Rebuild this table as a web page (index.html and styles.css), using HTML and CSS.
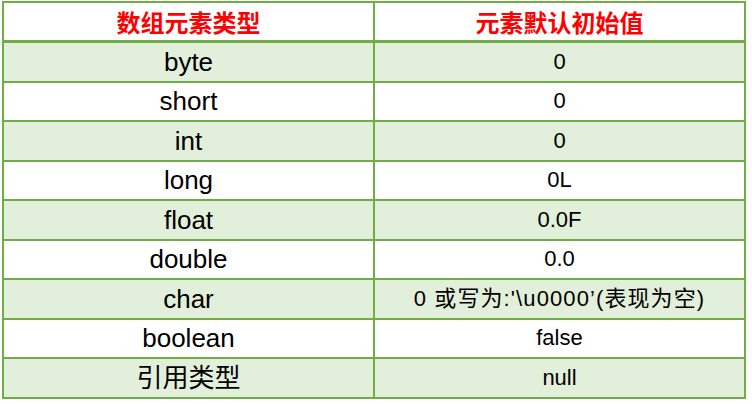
FILE: index.html
```html
<!DOCTYPE html>
<html lang="zh">
<head>
<meta charset="utf-8">
<link rel="stylesheet" href="styles.css">
</head>
<body>
<table class="tbl">
  <thead>
    <tr><th>数组元素类型</th><th>元素默认初始值</th></tr>
  </thead>
  <tbody>
    <tr class="g"><td class="k">byte</td><td class="v">0</td></tr>
    <tr><td class="k">short</td><td class="v">0</td></tr>
    <tr class="g"><td class="k">int</td><td class="v">0</td></tr>
    <tr><td class="k">long</td><td class="v">0L</td></tr>
    <tr class="g"><td class="k">float</td><td class="v">0.0F</td></tr>
    <tr><td class="k">double</td><td class="v">0.0</td></tr>
    <tr class="g"><td class="k">char</td><td class="v wide">0 或写为:'\u0000’(表现为空)</td></tr>
    <tr><td class="k">boolean</td><td class="v">false</td></tr>
    <tr class="g"><td class="k">引用类型</td><td class="v">null</td></tr>
  </tbody>
</table>
</body>
</html>
```
FILE: styles.css
```css
html, body {
  margin: 0;
  padding: 0;
  background: #ffffff;
}
body {
  padding: 1px 0 0 2px;
  font-family: "Liberation Sans", "Noto Sans CJK SC", sans-serif;
  color: #000;
}
.tbl {
  border-collapse: collapse;
  width: 744px;
  table-layout: fixed;
  border: 2px solid #70ad47;
}
.tbl th, .tbl td {
  border: 2px solid #70ad47;
  text-align: center;
  vertical-align: middle;
  padding: 0;
  line-height: 1;
}
.tbl th {
  height: 37px;
  color: #ff0000;
  font-weight: bold;
  font-size: 24px;
  font-family: "Noto Sans CJK SC", sans-serif;
  border-bottom-width: 3px;
}
.tbl td {
  height: 37.5px;
}
.tbl tr.g td {
  background: #e2efda;
}
.k {
  font-size: 26px;
}
.v {
  font-size: 22px;
}
.wide {
  letter-spacing: 1.1px;
}
```
